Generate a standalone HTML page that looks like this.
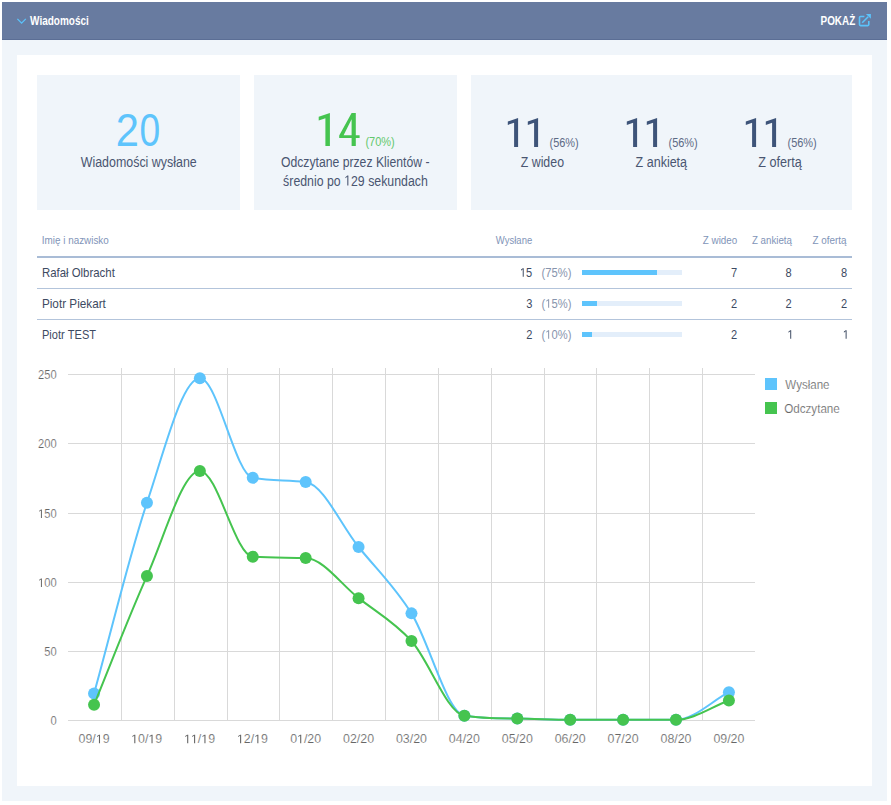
<!DOCTYPE html>
<html lang="pl"><head><meta charset="utf-8"><title>Wiadomości</title>
<style>
html,body{margin:0;padding:0;background:#fff;}
body{width:891px;height:805px;position:relative;overflow:hidden;font-family:"Liberation Sans", sans-serif;}
.abs{position:absolute;}
.header{left:2px;top:2px;width:885px;height:37px;background:#687ba0;border-bottom:1px solid #5b6e95;}
.bgwrap{left:2px;top:40px;width:885px;height:761px;background:#f0f5fa;}
.panel{left:17px;top:55px;width:855px;height:731px;background:#fff;}
.box{top:75px;height:135px;background:#f0f5fa;}
.hline{left:37px;width:815px;background:#b3c4db;}
.track{left:582px;width:100px;height:5px;background:#e3eefa;}
.fill{left:582px;height:5px;background:#5ec4fc;}
svg.ov{position:absolute;left:0;top:0;}
svg text{font-kerning:none;}
</style></head><body>
<div class="abs header"></div>
<div class="abs bgwrap"></div>
<div class="abs panel"></div>
<div class="abs box" style="left:37px;width:203px"></div>
<div class="abs box" style="left:254px;width:203px"></div>
<div class="abs box" style="left:471px;width:381px"></div>
<div class="abs hline" style="top:256px;height:2px;background:#a9bcd6"></div>
<div class="abs hline" style="top:288px;height:1px"></div>
<div class="abs hline" style="top:319px;height:1px"></div>
<div class="abs track" style="top:270px"></div><div class="abs fill" style="top:270px;width:75px"></div>
<div class="abs track" style="top:301px"></div><div class="abs fill" style="top:301px;width:15px"></div>
<div class="abs track" style="top:332px"></div><div class="abs fill" style="top:332px;width:10px"></div>
<svg class="ov" width="891" height="805" viewBox="0 0 891 805" font-family='"Liberation Sans", sans-serif'>
<g stroke="#d9d9d9" stroke-width="1" shape-rendering="crispEdges"><line x1="68" y1="720.5" x2="755" y2="720.5"/><line x1="68" y1="651.5" x2="755" y2="651.5"/><line x1="68" y1="582.5" x2="755" y2="582.5"/><line x1="68" y1="513.5" x2="755" y2="513.5"/><line x1="68" y1="443.5" x2="755" y2="443.5"/><line x1="68" y1="374.5" x2="755" y2="374.5"/><line x1="121.5" y1="368" x2="121.5" y2="720.5"/><line x1="174.5" y1="368" x2="174.5" y2="720.5"/><line x1="227.5" y1="368" x2="227.5" y2="720.5"/><line x1="279.5" y1="368" x2="279.5" y2="720.5"/><line x1="332.5" y1="368" x2="332.5" y2="720.5"/><line x1="385.5" y1="368" x2="385.5" y2="720.5"/><line x1="438.5" y1="368" x2="438.5" y2="720.5"/><line x1="491.5" y1="368" x2="491.5" y2="720.5"/><line x1="544.5" y1="368" x2="544.5" y2="720.5"/><line x1="596.5" y1="368" x2="596.5" y2="720.5"/><line x1="649.5" y1="368" x2="649.5" y2="720.5"/><line x1="702.5" y1="368" x2="702.5" y2="720.5"/></g>
<path d="M94.05 693.58 C111.68 629.97 129.32 555.30 146.95 502.75 C164.59 450.20 182.22 378.30 199.86 378.30 C217.50 378.30 235.13 474.41 252.76 477.86 C270.40 481.31 288.04 479.71 305.67 482.01 C323.31 484.31 340.94 525.11 358.57 547.00 C376.21 568.89 393.85 585.26 411.48 613.37 C429.12 641.49 446.75 712.94 464.39 715.70 C482.02 718.47 499.65 718.36 517.29 718.47 C534.92 718.58 552.56 719.85 570.19 719.85 C587.83 719.85 605.46 719.85 623.10 719.85 C640.73 719.85 658.37 719.85 676.00 719.85 C693.64 719.85 711.27 701.41 728.91 692.19" fill="none" stroke="#5ec4fc" stroke-width="2"/>
<g fill="#5ec4fc"><circle cx="94.05" cy="693.58" r="6"/><circle cx="146.95" cy="502.75" r="6"/><circle cx="199.86" cy="378.30" r="6"/><circle cx="252.76" cy="477.86" r="6"/><circle cx="305.67" cy="482.01" r="6"/><circle cx="358.57" cy="547.00" r="6"/><circle cx="411.48" cy="613.37" r="6"/><circle cx="464.39" cy="715.70" r="6"/><circle cx="517.29" cy="718.47" r="6"/><circle cx="570.19" cy="719.85" r="6"/><circle cx="623.10" cy="719.85" r="6"/><circle cx="676.00" cy="719.85" r="6"/><circle cx="728.91" cy="692.19" r="6"/></g>
<path d="M94.05 704.64 C111.68 661.77 129.32 614.99 146.95 576.04 C164.59 537.09 182.22 470.95 199.86 470.95 C217.50 470.95 235.13 555.43 252.76 556.68 C270.40 557.93 288.04 557.47 305.67 558.06 C323.31 558.66 340.94 584.34 358.57 598.16 C376.21 611.99 393.85 621.44 411.48 641.03 C429.12 660.62 446.75 712.94 464.39 715.70 C482.02 718.46 499.65 718.32 517.29 718.47 C534.92 718.62 552.56 719.85 570.19 719.85 C587.83 719.85 605.46 719.85 623.10 719.85 C640.73 719.85 658.37 719.85 676.00 719.85 C693.64 719.85 711.27 706.94 728.91 700.49" fill="none" stroke="#45c44f" stroke-width="2"/>
<g fill="#45c44f"><circle cx="94.05" cy="704.64" r="6"/><circle cx="146.95" cy="576.04" r="6"/><circle cx="199.86" cy="470.95" r="6"/><circle cx="252.76" cy="556.68" r="6"/><circle cx="305.67" cy="558.06" r="6"/><circle cx="358.57" cy="598.16" r="6"/><circle cx="411.48" cy="641.03" r="6"/><circle cx="464.39" cy="715.70" r="6"/><circle cx="517.29" cy="718.47" r="6"/><circle cx="570.19" cy="719.85" r="6"/><circle cx="623.10" cy="719.85" r="6"/><circle cx="676.00" cy="719.85" r="6"/><circle cx="728.91" cy="700.49" r="6"/></g>
<rect x="765" y="378" width="12" height="12" fill="#5ec4fc"/>
<rect x="765" y="402" width="12" height="12" fill="#45c44f"/>
<path d="M17.4 18.9 L21.6 23.1 L25.8 18.9" fill="none" stroke="#5bc3fb" stroke-width="1.3"/>
<g fill="none" stroke="#5bc3fb" stroke-width="1.6"><path d="M864.4 16.5 H860.5 Q859.5 16.5 859.5 17.5 V24.6 Q859.5 25.6 860.5 25.6 H867.8 Q868.8 25.6 868.8 24.6 V20.9"/><path d="M862.2 22.7 L868.2 16.7"/></g>
<path d="M865.9 13.9 H870.9 V18.8 Z" fill="#5bc3fb"/>
<path d="M318.7 116.7 L329.9 112.95 L329.9 145.9 L325.4 145.9 L325.4 118.2 L318.7 120.4 Z M351.6 112.9 L355.8 112.9 L355.8 135.2 L359.6 135.2 L359.6 138.1 L355.8 138.1 L355.8 145.9 L351.6 145.9 L351.6 138.1 L339.2 138.1 L339.2 135.6 Z M351.6 119.2 L343.6 135.2 L351.6 135.2 Z" fill="#45c44f"/>
<path d="M507.80 121.6 L518.10 117.9 L518.10 146.9 L514.10 146.9 L514.10 122.7 L507.80 124.9 Z M527.80 121.6 L538.10 117.9 L538.10 146.9 L534.10 146.9 L534.10 122.7 L527.80 124.9 Z M626.80 121.6 L637.10 117.9 L637.10 146.9 L633.10 146.9 L633.10 122.7 L626.80 124.9 Z M646.80 121.6 L657.10 117.9 L657.10 146.9 L653.10 146.9 L653.10 122.7 L646.80 124.9 Z M745.80 121.6 L756.10 117.9 L756.10 146.9 L752.10 146.9 L752.10 122.7 L745.80 124.9 Z M765.80 121.6 L776.10 117.9 L776.10 146.9 L772.10 146.9 L772.10 122.7 L765.80 124.9 Z" fill="#3e5479"/>
<text transform="translate(29.99 24.90) scale(0.7695 1)" font-size="13.00" fill="#ffffff" font-weight="700">Wiadomości</text><text transform="translate(820.54 24.80) scale(0.7637 1)" font-size="13.00" fill="#ffffff" font-weight="700">POKAŻ</text><text transform="translate(115.80 145.70) scale(0.8893 1)" font-size="46.90" fill="#5ec4fc">2</text><text transform="translate(139.55 145.70) scale(0.7940 1)" font-size="46.90" fill="#5ec4fc">0</text><text transform="translate(80.65 166.80) scale(0.8467 1)" font-size="14.70" fill="#4a5671">Wiadomości wysłane</text><text transform="translate(365.42 145.90) scale(0.8878 1)" font-size="12.40" fill="#62c86c">(70%)</text><text transform="translate(280.92 166.80) scale(0.8312 1)" font-size="14.70" fill="#4a5671">Odczytane przez Klientów -</text><text transform="translate(283.11 185.60) scale(0.8397 1)" font-size="14.70" fill="#4a5671">średnio po  29 sekundach</text><text transform="translate(549.52 147.00) scale(0.8846 1)" font-size="12.40" fill="#5d6a85">(56%)</text><text transform="translate(520.71 166.80) scale(0.8415 1)" font-size="14.70" fill="#4a5671">Z wideo</text><text transform="translate(668.52 147.00) scale(0.8846 1)" font-size="12.40" fill="#5d6a85">(56%)</text><text transform="translate(635.60 166.80) scale(0.8517 1)" font-size="14.70" fill="#4a5671">Z ankietą</text><text transform="translate(787.52 147.00) scale(0.8846 1)" font-size="12.40" fill="#5d6a85">(56%)</text><text transform="translate(758.30 166.80) scale(0.8608 1)" font-size="14.70" fill="#4a5671">Z ofertą</text><text transform="translate(41.79 243.90) scale(0.8685 1)" font-size="11.40" fill="#8194b8">Imię i nazwisko</text><text transform="translate(495.86 243.80) scale(0.8319 1)" font-size="11.40" fill="#8194b8">Wysłane</text><text transform="translate(702.79 243.80) scale(0.8650 1)" font-size="11.40" fill="#8194b8">Z wideo</text><text transform="translate(751.89 243.80) scale(0.8554 1)" font-size="11.40" fill="#8194b8">Z ankietą</text><text transform="translate(812.49 243.80) scale(0.8684 1)" font-size="11.40" fill="#8194b8">Z ofertą</text><text transform="translate(41.96 276.70) scale(0.9422 1)" font-size="12.10" fill="#3d4a62">Rafał Olbracht</text><text transform="translate(519.95 276.70) scale(0.9000 1)" font-size="12.30" fill="#3d4a62"> 5</text><text transform="translate(541.61 276.70) scale(0.9110 1)" font-size="12.30" fill="#8794ad">(75%)</text><text transform="translate(731.00 276.70) scale(0.9000 1)" font-size="12.30" fill="#3d4a62">7</text><text transform="translate(785.52 276.70) scale(0.9000 1)" font-size="12.30" fill="#3d4a62">8</text><text transform="translate(840.92 276.70) scale(0.9000 1)" font-size="12.30" fill="#3d4a62">8</text><text transform="translate(41.94 307.70) scale(0.9712 1)" font-size="12.10" fill="#3d4a62">Piotr Piekart</text><text transform="translate(526.13 307.70) scale(0.9000 1)" font-size="12.30" fill="#3d4a62">3</text><text transform="translate(541.61 307.70) scale(0.9110 1)" font-size="12.30" fill="#8794ad">( 5%)</text><text transform="translate(731.00 307.70) scale(0.9000 1)" font-size="12.30" fill="#3d4a62">2</text><text transform="translate(785.60 307.70) scale(0.9000 1)" font-size="12.30" fill="#3d4a62">2</text><text transform="translate(841.00 307.70) scale(0.9000 1)" font-size="12.30" fill="#3d4a62">2</text><text transform="translate(41.99 338.70) scale(0.9137 1)" font-size="12.10" fill="#3d4a62">Piotr TEST</text><text transform="translate(526.20 338.70) scale(0.9000 1)" font-size="12.30" fill="#3d4a62">2</text><text transform="translate(541.61 338.70) scale(0.9110 1)" font-size="12.30" fill="#8794ad">( 0%)</text><text transform="translate(731.00 338.70) scale(0.9000 1)" font-size="12.30" fill="#3d4a62">2</text><text transform="translate(787.44 338.70) scale(0.9000 1)" font-size="12.30" fill="#3d4a62"> </text><text transform="translate(842.84 338.70) scale(0.9000 1)" font-size="12.30" fill="#3d4a62"> </text><text transform="translate(50.53 724.90) scale(0.9000 1)" font-size="12.40" fill="#666666" stroke="#fff" stroke-width="0.18">0</text><text transform="translate(44.32 655.90) scale(0.9000 1)" font-size="12.40" fill="#666666" stroke="#fff" stroke-width="0.18">50</text><text transform="translate(38.12 586.90) scale(0.9000 1)" font-size="12.40" fill="#666666" stroke="#fff" stroke-width="0.18"> 00</text><text transform="translate(38.12 517.90) scale(0.9000 1)" font-size="12.40" fill="#666666" stroke="#fff" stroke-width="0.18"> 50</text><text transform="translate(38.12 447.90) scale(0.9000 1)" font-size="12.40" fill="#666666" stroke="#fff" stroke-width="0.18">200</text><text transform="translate(38.12 378.90) scale(0.9000 1)" font-size="12.40" fill="#666666" stroke="#fff" stroke-width="0.18">250</text><text transform="translate(78.59 743.20) scale(1.0000 1)" font-size="12.40" fill="#666666" stroke="#fff" stroke-width="0.18">09/ 9</text><text transform="translate(131.14 743.20) scale(1.0000 1)" font-size="12.40" fill="#666666" stroke="#fff" stroke-width="0.18"> 0/ 9</text><text transform="translate(184.04 743.20) scale(1.0000 1)" font-size="12.40" fill="#666666" stroke="#fff" stroke-width="0.18">  / 9</text><text transform="translate(236.95 743.20) scale(1.0000 1)" font-size="12.40" fill="#666666" stroke="#fff" stroke-width="0.18"> 2/ 9</text><text transform="translate(290.15 743.20) scale(1.0000 1)" font-size="12.40" fill="#666666" stroke="#fff" stroke-width="0.18">0 /20</text><text transform="translate(343.06 743.20) scale(1.0000 1)" font-size="12.40" fill="#666666" stroke="#fff" stroke-width="0.18">02/20</text><text transform="translate(395.96 743.20) scale(1.0000 1)" font-size="12.40" fill="#666666" stroke="#fff" stroke-width="0.18">03/20</text><text transform="translate(448.87 743.20) scale(1.0000 1)" font-size="12.40" fill="#666666" stroke="#fff" stroke-width="0.18">04/20</text><text transform="translate(501.77 743.20) scale(1.0000 1)" font-size="12.40" fill="#666666" stroke="#fff" stroke-width="0.18">05/20</text><text transform="translate(554.68 743.20) scale(1.0000 1)" font-size="12.40" fill="#666666" stroke="#fff" stroke-width="0.18">06/20</text><text transform="translate(607.58 743.20) scale(1.0000 1)" font-size="12.40" fill="#666666" stroke="#fff" stroke-width="0.18">07/20</text><text transform="translate(660.49 743.20) scale(1.0000 1)" font-size="12.40" fill="#666666" stroke="#fff" stroke-width="0.18">08/20</text><text transform="translate(713.39 743.20) scale(1.0000 1)" font-size="12.40" fill="#666666" stroke="#fff" stroke-width="0.18">09/20</text><text transform="translate(785.25 388.50) scale(0.9309 1)" font-size="12.40" fill="#666666" stroke="#fff" stroke-width="0.18">Wysłane</text><text transform="translate(784.15 412.50) scale(0.9409 1)" font-size="12.40" fill="#666666" stroke="#fff" stroke-width="0.18">Odczytane</text>
<path transform="translate(344.18 185.60) scale(0.00603 -0.00718)" d="M515 0L515 1237L197 1010L197 1180L530 1409L696 1409L696 0Z" fill="#4a5671"/><path transform="translate(519.95 276.70) scale(0.00541 -0.00601)" d="M515 0L515 1237L197 1010L197 1180L530 1409L696 1409L696 0Z" fill="#3d4a62"/><path transform="translate(545.34 307.70) scale(0.00547 -0.00601)" d="M515 0L515 1237L197 1010L197 1180L530 1409L696 1409L696 0Z" fill="#8794ad"/><path transform="translate(545.34 338.70) scale(0.00547 -0.00601)" d="M515 0L515 1237L197 1010L197 1180L530 1409L696 1409L696 0Z" fill="#8794ad"/><path transform="translate(787.44 338.70) scale(0.00541 -0.00601)" d="M515 0L515 1237L197 1010L197 1180L530 1409L696 1409L696 0Z" fill="#3d4a62"/><path transform="translate(842.84 338.70) scale(0.00541 -0.00601)" d="M515 0L515 1237L197 1010L197 1180L530 1409L696 1409L696 0Z" fill="#3d4a62"/><path transform="translate(38.12 586.90) scale(0.00545 -0.00605)" d="M515 0L515 1237L197 1010L197 1180L530 1409L696 1409L696 0Z" fill="#666666"/><path transform="translate(38.12 517.90) scale(0.00545 -0.00605)" d="M515 0L515 1237L197 1010L197 1180L530 1409L696 1409L696 0Z" fill="#666666"/><path transform="translate(95.82 743.20) scale(0.00605 -0.00605)" d="M515 0L515 1237L197 1010L197 1180L530 1409L696 1409L696 0Z" fill="#666666"/><path transform="translate(131.14 743.20) scale(0.00605 -0.00605)" d="M515 0L515 1237L197 1010L197 1180L530 1409L696 1409L696 0Z" fill="#666666"/><path transform="translate(148.37 743.20) scale(0.00605 -0.00605)" d="M515 0L515 1237L197 1010L197 1180L530 1409L696 1409L696 0Z" fill="#666666"/><path transform="translate(184.04 743.20) scale(0.00605 -0.00605)" d="M515 0L515 1237L197 1010L197 1180L530 1409L696 1409L696 0Z" fill="#666666"/><path transform="translate(190.94 743.20) scale(0.00605 -0.00605)" d="M515 0L515 1237L197 1010L197 1180L530 1409L696 1409L696 0Z" fill="#666666"/><path transform="translate(201.28 743.20) scale(0.00605 -0.00605)" d="M515 0L515 1237L197 1010L197 1180L530 1409L696 1409L696 0Z" fill="#666666"/><path transform="translate(236.95 743.20) scale(0.00605 -0.00605)" d="M515 0L515 1237L197 1010L197 1180L530 1409L696 1409L696 0Z" fill="#666666"/><path transform="translate(254.18 743.20) scale(0.00605 -0.00605)" d="M515 0L515 1237L197 1010L197 1180L530 1409L696 1409L696 0Z" fill="#666666"/><path transform="translate(297.05 743.20) scale(0.00605 -0.00605)" d="M515 0L515 1237L197 1010L197 1180L530 1409L696 1409L696 0Z" fill="#666666"/>
</svg>
</body></html>
